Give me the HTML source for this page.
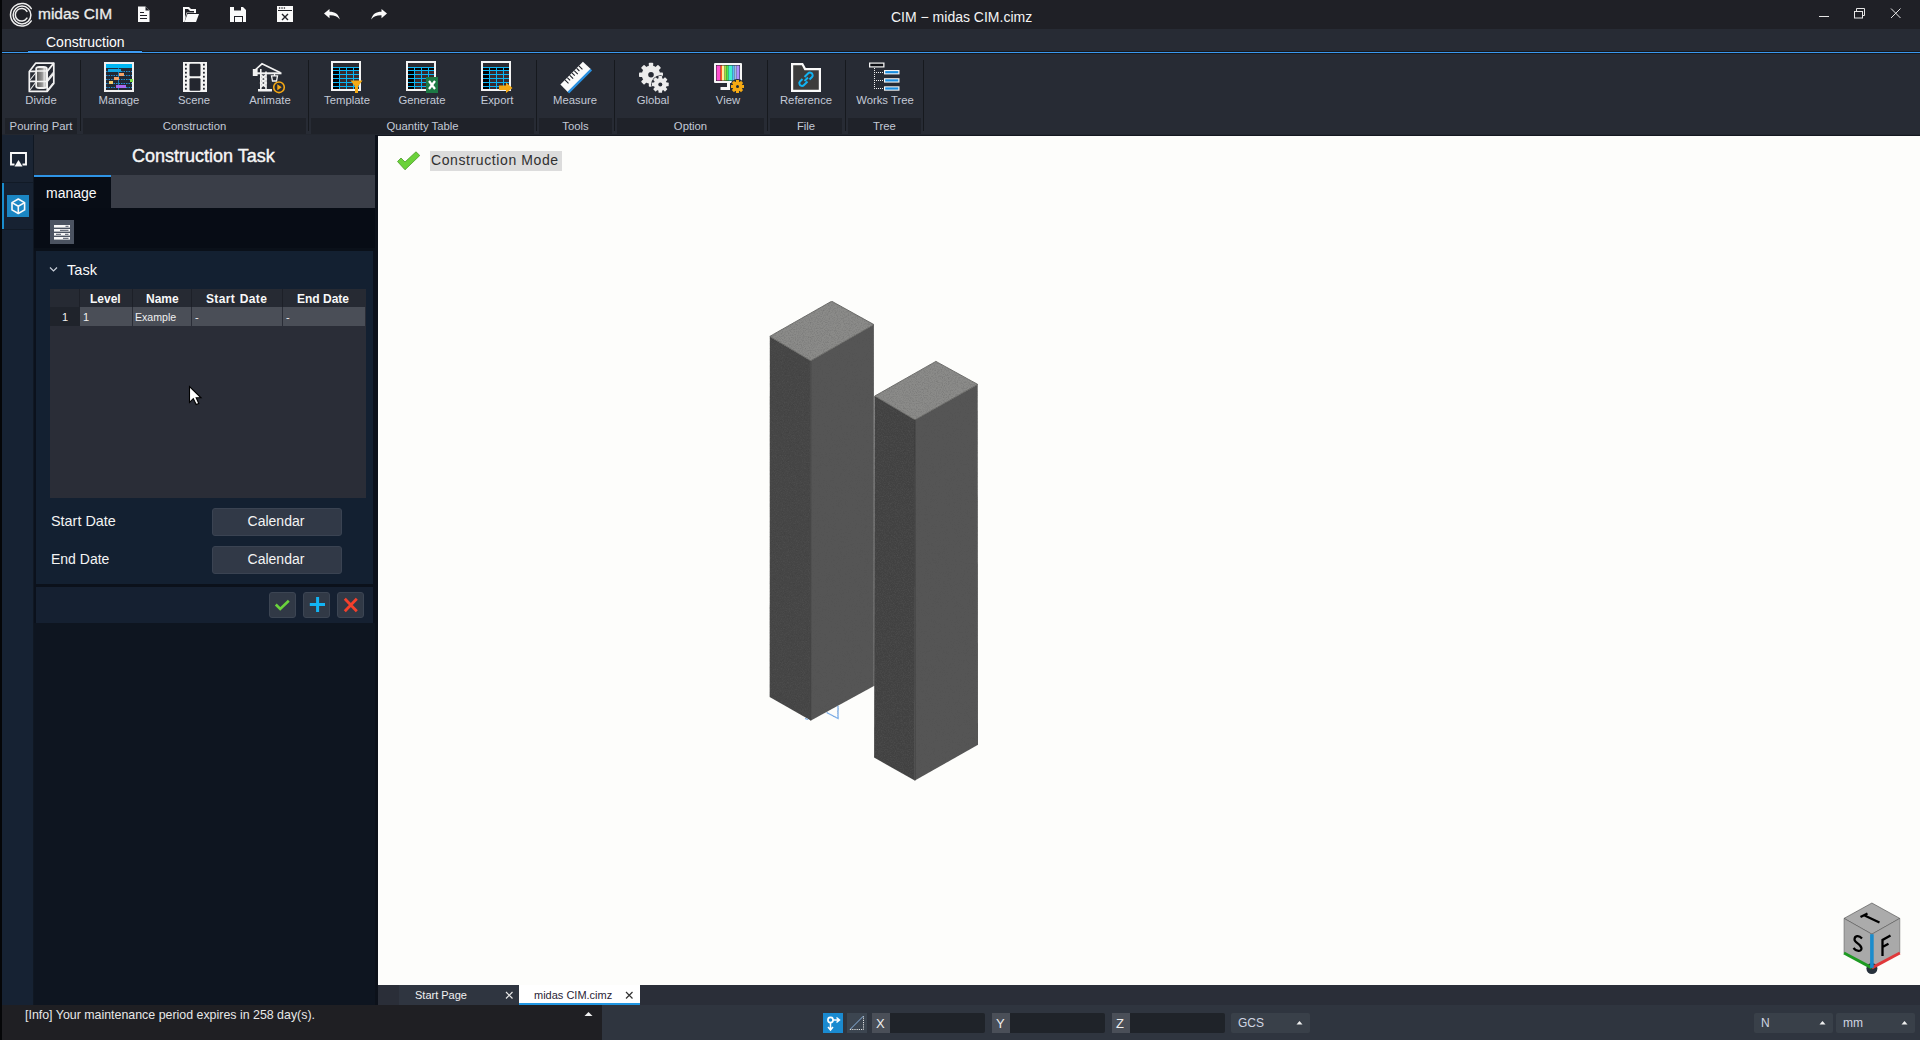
<!DOCTYPE html>
<html><head><meta charset="utf-8">
<style>
*{margin:0;padding:0;box-sizing:border-box}
html,body{width:1920px;height:1040px;overflow:hidden;background:#0a0f18;font-family:"Liberation Sans",sans-serif}
.a{position:absolute}
svg{position:absolute;overflow:visible}
#title{left:0;top:0;width:1920px;height:29px;background:#1f2026}
#ribtabs{left:0;top:29px;width:1920px;height:23px;background:#272b34}
#blueline{left:2px;top:51px;width:1918px;height:3px;background:linear-gradient(#16191f 0 1px,#3a98ee 1px 2px,#16191f 2px 3px)}
#ribbon{left:0;top:53px;width:1920px;height:81px;background:#272b34}
#ribbot{left:0;top:134px;width:1920px;height:2px;background:linear-gradient(#23272f 0 1px,#141820 1px 2px)}
#lborder{left:0;top:0;width:2px;height:1040px;background:#050608}
.rb{color:#c3c9d6;font-size:11.3px;text-align:center;width:90px;top:93px;height:14px;line-height:14px;white-space:nowrap}
.gl{top:118px;height:16px;background:#1f2229;color:#c3c9d6;font-size:11.3px;text-align:center;line-height:16px;white-space:nowrap}
.sep{top:60px;width:1px;height:71px;background:#16191e}
#side{left:2px;top:135px;width:32px;height:870px;background:#131c28}
#panel{left:34px;top:135px;width:341px;height:870px;background:#0b111c}
#pborder{left:375px;top:135px;width:3px;height:850px;background:#0c121c}
#view{left:378px;top:136px;width:1542px;height:849px;background:#fdfdfb}
#doctabs{left:378px;top:985px;width:1542px;height:20px;background:#2a2e38}
#status{left:0;top:1005px;width:602px;height:35px;background:#1f1f23}
#status2{left:602px;top:1005px;width:1318px;height:35px;background:#2f353f}
.t{white-space:nowrap;line-height:1}
</style></head><body>
<div class="a" id="title"></div>
<div class="a" id="ribtabs"></div>
<div class="a" id="ribbon"></div>
<div class="a" id="ribbot"></div>
<div class="a" id="blueline"></div>
<div class="a" id="side"></div>
<div class="a" id="panel"></div>
<div class="a" id="pborder"></div>
<div class="a" id="view"></div>
<div class="a" id="doctabs"></div>
<div class="a" id="status"></div>
<div class="a" id="status2"></div>

<!-- TITLEBAR -->
<svg style="left:0;top:0" width="120" height="29">
  <g fill="none" stroke="#eeeeee" stroke-width="1.5" stroke-linecap="round">
    <path d="M31.28,8.65 A11.3,11.3 0 1 0 31.28,20.95"/>
    <circle cx="22" cy="15" r="8.9"/>
    <path d="M26.94,11.46 A6.3,6.3 0 1 0 26.94,18.14"/>
  </g>
</svg>
<div class="a t" style="left:38px;top:6px;font-size:15.5px;color:#ececec;-webkit-text-stroke:0.3px #ececec">midas CIM</div>
<svg style="left:137px;top:6px" width="14" height="17"><path d="M1,0.5 H8.5 L12.5,4.5 V16 H1 Z" fill="#fafafa"/><path d="M8.5,0.5 V4.5 H12.5" fill="#1f2026"/><path d="M3,6.5 H7 M3,9.5 H10 M3,12.5 H10" stroke="#1f2026" stroke-width="1.1"/></svg>
<svg style="left:183px;top:7px" width="18" height="16"><path d="M0,0 H6 L8,2 H13 V6 H4 L1.5,15 H0 Z" fill="#fafafa"/><path d="M4.5,7 H16 L13,15 H1.5 Z" fill="#fafafa"/><path d="M2,2 H5 L7,4 H11 V5.5 H3.5 L2,11 Z" fill="#1f2026"/></svg>
<svg style="left:230px;top:7px" width="17" height="16"><path d="M0,0 H13 L16,3 V15 H0 Z" fill="#fafafa"/><rect x="4" y="0" width="7" height="3.5" fill="#1f2026"/><rect x="4" y="9" width="9" height="6" fill="#1f2026"/><rect x="5" y="10" width="7" height="5" fill="#fafafa"/></svg>
<svg style="left:277px;top:6px" width="17" height="17"><rect x="0" y="0" width="16" height="16" fill="#fafafa"/><rect x="1" y="4" width="14" height="1" fill="#1f2026"/><circle cx="2.6" cy="2" r="0.8" fill="#1f2026"/><circle cx="5" cy="2" r="0.8" fill="#1f2026"/><circle cx="7.4" cy="2" r="0.8" fill="#1f2026"/><path d="M5,8 L11,14 M11,8 L5,14" stroke="#1f2026" stroke-width="1.4"/></svg>
<svg style="left:324px;top:9px" width="17" height="12"><path d="M0,4.5 L5.5,0 V2.8 C11,2.8 14.5,5 15.8,10.5 C13.5,7.5 10.5,6.2 5.5,6.3 V9.3 Z" fill="#fafafa"/></svg>
<svg style="left:371px;top:9px" width="17" height="12"><path d="M16,4.5 L10.5,0 V2.8 C5,2.8 1.5,5 0.2,10.5 C2.5,7.5 5.5,6.2 10.5,6.3 V9.3 Z" fill="#fafafa"/></svg>

<div class="a t" style="left:891px;top:10px;font-size:14px;color:#f4f4f4">CIM − midas CIM.cimz</div>

<svg style="left:1815px;top:5px" width="100" height="20">
  <path d="M4,11.5 H14" stroke="#e6e6e6" stroke-width="1"/>
  <g fill="none" stroke="#e6e6e6" stroke-width="1"><rect x="39.5" y="6.5" width="8" height="6.5"/><path d="M41.5,6.5 V3.5 H49.5 V10.5 H47.5"/></g>
  <path d="M76,3.5 L85.5,13 M85.5,3.5 L76,13" stroke="#e6e6e6" stroke-width="1"/>
</svg>

<!-- RIBBON TAB -->
<div class="a t" style="left:46px;top:35px;font-size:14px;color:#ffffff">Construction</div>
<div class="a" style="left:28px;top:50px;width:114px;height:3px;background:linear-gradient(#16191f 0 1px,#3d9cf5 1px 3px)"></div>

<!-- RIBBON SEPARATORS / GROUP LABELS -->
<div class="a sep" style="left:80px"></div>
<div class="a sep" style="left:308px"></div>
<div class="a sep" style="left:536px"></div>
<div class="a sep" style="left:614px"></div>
<div class="a sep" style="left:767px"></div>
<div class="a sep" style="left:845px"></div>
<div class="a sep" style="left:923px"></div>
<div class="a gl" style="left:5px;width:72px">Pouring Part</div>
<div class="a gl" style="left:83px;width:223px">Construction</div>
<div class="a gl" style="left:311px;width:223px">Quantity Table</div>
<div class="a gl" style="left:539px;width:73px">Tools</div>
<div class="a gl" style="left:617px;width:147px">Option</div>
<div class="a gl" style="left:770px;width:72px">File</div>
<div class="a gl" style="left:848px;width:73px">Tree</div>

<!-- RIBBON BUTTON LABELS -->
<div class="a rb" style="left:-4px">Divide</div>
<div class="a rb" style="left:74px">Manage</div>
<div class="a rb" style="left:149px">Scene</div>
<div class="a rb" style="left:225px">Animate</div>
<div class="a rb" style="left:302px">Template</div>
<div class="a rb" style="left:377px">Generate</div>
<div class="a rb" style="left:452px">Export</div>
<div class="a rb" style="left:530px">Measure</div>
<div class="a rb" style="left:608px">Global</div>
<div class="a rb" style="left:683px">View</div>
<div class="a rb" style="left:761px">Reference</div>
<div class="a rb" style="left:840px">Works Tree</div>


<!-- RIBBON ICONS -->
<svg style="left:0;top:0" width="0" height="0">
 <defs>
  <symbol id="tbl" viewBox="0 0 30 30">
   <rect x="0" y="0" width="30" height="30" fill="#f4f4f4"/>
   <rect x="2" y="2" width="26" height="26" fill="#2b2b31"/>
   <rect x="2" y="6" width="26" height="22" fill="#3a2a2c"/>
   <rect x="2" y="6" width="6" height="22" fill="#000"/>
   <rect x="2" y="6" width="26" height="3" fill="#000"/>
   <g fill="#0ab4f4">
    <rect x="2" y="6" width="26" height="1"/><rect x="2" y="9" width="26" height="1"/><rect x="2" y="13" width="26" height="1"/>
    <rect x="2" y="17" width="26" height="1"/><rect x="2" y="21" width="26" height="1"/><rect x="2" y="25" width="26" height="1"/>
    <rect x="8" y="6" width="1" height="22"/><rect x="15" y="6" width="1" height="22"/><rect x="22" y="6" width="1" height="22"/>
   </g>
  </symbol>
 </defs>
</svg>
<!-- Divide -->
<svg style="left:28px;top:62px" width="28" height="32">
 <defs><linearGradient id="cyl" x1="0" x2="1"><stop offset="0" stop-color="#5a5a5a"/><stop offset="0.6" stop-color="#9a9a9a"/><stop offset="0.8" stop-color="#e0e0e0"/><stop offset="1" stop-color="#bdbdbd"/></linearGradient></defs>
 <path d="M2,28 L8,20 M2,18 L8,10.5 M19.5,17.5 L25,10.5 M19.5,28 L25,21" stroke="#e8e8e8" stroke-width="1.1"/>
 <g fill="none" stroke="#f2f2f2" stroke-width="1.7" stroke-linejoin="round">
  <path d="M7.8,1.1 H25.8 V21.5 L19.2,29.4 H1.3 V9.4 Z"/>
  <path d="M1.3,9.4 H19.2 V29.4 M19.2,9.4 L25.8,1.1 M1.3,19.4 H19.2 L25.8,11.4"/>
 </g>
 <rect x="7.3" y="3.9" width="12.4" height="23" rx="4" ry="2.6" fill="#f2f2f2"/>
 <rect x="9" y="6" width="9" height="19" rx="1" fill="url(#cyl)"/>
 <path d="M8,9 H19 M8,19.4 H19" stroke="#f2f2f2" stroke-width="1.5"/>
</svg>
<!-- Manage -->
<svg style="left:104px;top:62px" width="30" height="30">
 <rect x="0" y="0" width="30" height="30" fill="#f0f0f0"/>
 <rect x="2" y="2" width="26" height="26" fill="#222833"/>
 <rect x="2" y="2" width="26" height="4" fill="#00b6f2"/>
 <g stroke="#1f8fd6" stroke-width="1" stroke-dasharray="1.5 1">
  <path d="M2,9.5 H28 M2,13.5 H28 M2,17.5 H28 M2,21.5 H28 M2,25.5 H28"/>
 </g>
 <path d="M14.5,6 V28" stroke="#1f8fd6" stroke-width="0.8"/>
 <rect x="4" y="7" width="13" height="3" fill="#11a3e0"/>
 <rect x="15" y="11" width="5" height="3" fill="#f5a26a"/>
 <rect x="10" y="15" width="5" height="3" fill="#f5a26a"/>
 <rect x="5" y="19" width="4" height="3" fill="#f5cc6a"/>
 <rect x="26" y="17" width="3" height="3" fill="#7de04a"/>
 <rect x="12" y="23" width="10" height="3" fill="#a86af0"/>
</svg>
<!-- Scene -->
<svg style="left:183px;top:62px" width="24" height="30">
 <rect x="0" y="0" width="24" height="30" fill="#f4f4f4"/>
 <rect x="6.5" y="1.8" width="11" height="12.5" rx="1" fill="#23262f"/>
 <rect x="6.5" y="16.3" width="11" height="12.5" rx="1" fill="#23262f"/>
 <g fill="#23262f">
  <rect x="2" y="1.8" width="1.8" height="1.8"/><rect x="2" y="5.8" width="1.8" height="1.8"/><rect x="2" y="9.8" width="1.8" height="1.8"/><rect x="2" y="13.8" width="1.8" height="1.8"/><rect x="2" y="17.8" width="1.8" height="1.8"/><rect x="2" y="21.8" width="1.8" height="1.8"/><rect x="2" y="25.8" width="1.8" height="1.8"/>
  <rect x="20" y="1.8" width="1.8" height="1.8"/><rect x="20" y="5.8" width="1.8" height="1.8"/><rect x="20" y="9.8" width="1.8" height="1.8"/><rect x="20" y="13.8" width="1.8" height="1.8"/><rect x="20" y="17.8" width="1.8" height="1.8"/><rect x="20" y="21.8" width="1.8" height="1.8"/><rect x="20" y="25.8" width="1.8" height="1.8"/>
 </g>
</svg>
<!-- Animate -->
<svg style="left:252px;top:62px" width="34" height="32">
 <g fill="none" stroke="#f2f2f2" stroke-width="1.6">
  <path d="M8.8,28 V7 M14,28 V9.5"/>
  <path d="M8.8,13 L14,17 L8.8,21 L14,25 M14,13 L8.8,17 L14,21 L8.8,25"/>
  <path d="M2,9 L10,1.8 L28.5,10.8"/>
 </g>
 <rect x="1" y="10.3" width="28.5" height="2" fill="#f2f2f2"/>
 <rect x="0.8" y="7" width="4.8" height="7" fill="#f2f2f2"/>
 <rect x="6" y="27" width="14" height="2.5" fill="#f2f2f2"/>
 <path d="M19.5,13.8 H25.5 L24.5,19 H20.5 Z" fill="none" stroke="#f2f2f2" stroke-width="1.3"/>
 <path d="M22.5,12 V14" stroke="#f2f2f2" stroke-width="1.2"/>
 <circle cx="27" cy="25.3" r="5.3" fill="#272b34" stroke="#f5a815" stroke-width="1.6"/>
 <path d="M25.3,22.3 L29.7,25.3 L25.3,28.3 Z" fill="#f5a815"/>
</svg>
<!-- Template -->
<svg style="left:331px;top:61px" width="34" height="34">
 <use href="#tbl" x="0" y="0" width="30" height="30"/>
 <path d="M19.5,19.5 H31.5 L27,25.5 V32 H24 V25.5 Z" fill="#f5aa14"/>
</svg>
<!-- Generate -->
<svg style="left:406px;top:61px" width="34" height="34">
 <use href="#tbl" x="0" y="0" width="30" height="30"/>
 <rect x="20" y="16" width="12" height="16" fill="#1d7a45"/>
 <path d="M23,20 L29,28 M29,20 L23,28" stroke="#fff" stroke-width="2.2"/>
</svg>
<!-- Export -->
<svg style="left:481px;top:61px" width="34" height="34">
 <use href="#tbl" x="0" y="0" width="30" height="30"/>
 <path d="M18,24.5 H25 V21.5 L31.5,27 L25,32 V29 H18 Z" fill="#f5aa14"/>
</svg>
<!-- Measure -->
<svg style="left:558px;top:60px" width="36" height="36">
 <path d="M2.4,24.5 L24.9,1.8 L33,9.3 L10,32.3 Z" fill="#fafafa"/>
 <path d="M10.3,32.6 L33.3,9.6" stroke="#2a90e0" stroke-width="2.2"/>
 <path d="M6.97,19.89 L10.51,23.41 M9.29,17.55 L12.13,20.36 M11.61,15.21 L15.15,18.73 M13.93,12.87 L16.77,15.68 M16.25,10.53 L19.79,14.05 M18.57,8.19 L21.40,11.01 M20.89,5.85 L24.43,9.37 " stroke="#1d2028" stroke-width="1.1"/>
</svg>
<!-- Global -->
<svg style="left:638px;top:62px" width="34" height="34">
 <g fill="#ececec" transform="translate(13 12.75)">
  <circle r="9.3"/>
  <rect x="-2.2" y="-12" width="4.4" height="24" rx="0.8"/><rect x="-2.2" y="-12" width="4.4" height="24" rx="0.8" transform="rotate(45)"/><rect x="-2.2" y="-12" width="4.4" height="24" rx="0.8" transform="rotate(90)"/><rect x="-2.2" y="-12" width="4.4" height="24" rx="0.8" transform="rotate(135)"/>
 </g>
 <circle cx="13" cy="12.75" r="2.8" fill="#272b34"/>
 <circle cx="22.3" cy="22.4" r="9.2" fill="#272b34"/>
 <g fill="#ececec" transform="translate(22.3 22.4)">
  <circle r="6.4"/>
  <rect x="-1.8" y="-8.4" width="3.6" height="16.8" rx="0.6"/><rect x="-1.8" y="-8.4" width="3.6" height="16.8" rx="0.6" transform="rotate(45)"/><rect x="-1.8" y="-8.4" width="3.6" height="16.8" rx="0.6" transform="rotate(90)"/><rect x="-1.8" y="-8.4" width="3.6" height="16.8" rx="0.6" transform="rotate(135)"/>
 </g>
 <circle cx="22.3" cy="22.4" r="2" fill="#272b34"/>
</svg>
<!-- View -->
<svg style="left:713px;top:62px" width="32" height="32">
 <rect x="1" y="1" width="28" height="20" rx="1" fill="#f6f6f6"/>
 <rect x="3" y="3" width="24" height="16" fill="#1a1a22"/>
 <g>
  <rect x="3.5" y="3.5" width="4" height="15" fill="#ff4fd0"/><rect x="7.5" y="3.5" width="1.5" height="15" fill="#ff5a20"/><rect x="9" y="3.5" width="2.5" height="15" fill="#fff0a0"/><rect x="11.5" y="3.5" width="2" height="15" fill="#a0e040"/><rect x="13.5" y="3.5" width="2" height="15" fill="#4de84a"/><rect x="15.5" y="3.5" width="4" height="15" fill="#40f0d0"/><rect x="19.5" y="3.5" width="2" height="15" fill="#5ab8ff"/><rect x="21.5" y="3.5" width="2" height="15" fill="#9cc0e0"/><rect x="23.5" y="3.5" width="3" height="15" fill="#b090ff"/>
 </g>
 <rect x="14" y="21" width="3" height="7" fill="#f6f6f6"/>
 <rect x="7.5" y="25" width="9.5" height="3" fill="#f6f6f6"/>
 <circle cx="24.5" cy="24.5" r="7.5" fill="#272b34"/>
 <g fill="#f5aa14" transform="translate(24.5 24.5)">
  <circle r="5"/><rect x="-1.5" y="-6.5" width="3" height="13"/><rect x="-1.5" y="-6.5" width="3" height="13" transform="rotate(45)"/><rect x="-1.5" y="-6.5" width="3" height="13" transform="rotate(90)"/><rect x="-1.5" y="-6.5" width="3" height="13" transform="rotate(135)"/>
 </g>
 <circle cx="24.5" cy="24.5" r="1.5" fill="#1b2a3a"/>
</svg>
<!-- Reference -->
<svg style="left:791px;top:63px" width="31" height="30">
 <path d="M0,0 H12 L14.8,5 H30 V29 H0 Z" fill="#fafafa"/>
 <path d="M2.2,2.2 H10.8 L13.4,7.2 H27.8 V26.8 H2.2 Z" fill="#3c3c3c"/>
 <g fill="none" stroke="#12b4f4" stroke-width="2">
  <path d="M13.5,14 L17,10.5 C18.5,9 21,9.5 21.5,11.5 C22,12.5 21.5,13.5 21,14 L18.5,16.5"/>
  <path d="M16.5,18.5 L13,22 C11.5,23.5 9,23 8.5,21 C8,20 8.5,19 9,18.5 L11.5,16"/>
  <path d="M13.5,18 L17,14.5"/>
 </g>
</svg>
<!-- Works Tree -->
<svg style="left:869px;top:62px" width="32" height="30">
 <rect x="0" y="0.5" width="15.5" height="5" fill="#f4f4f4"/>
 <rect x="1.3" y="1.7" width="12.9" height="2.6" fill="#0c0e14"/>
 <g fill="#eeeeee"><rect x="5" y="6" width="1" height="1"/><rect x="5" y="8" width="1" height="1"/><rect x="5" y="10" width="1" height="1"/><rect x="5" y="12" width="1" height="1"/><rect x="5" y="14" width="1" height="1"/><rect x="5" y="16" width="1" height="1"/><rect x="5" y="18" width="1" height="1"/><rect x="5" y="20" width="1" height="1"/><rect x="5" y="22" width="1" height="1"/><rect x="5" y="24" width="1" height="1"/><rect x="5" y="26" width="1" height="1"/><rect x="7" y="10" width="1" height="1"/><rect x="9" y="10" width="1" height="1"/><rect x="11" y="10" width="1" height="1"/><rect x="13" y="10" width="1" height="1"/><rect x="7" y="18" width="1" height="1"/><rect x="9" y="18" width="1" height="1"/><rect x="11" y="18" width="1" height="1"/><rect x="13" y="18" width="1" height="1"/><rect x="7" y="26" width="1" height="1"/><rect x="9" y="26" width="1" height="1"/><rect x="11" y="26" width="1" height="1"/><rect x="13" y="26" width="1" height="1"/></g>
 <g fill="#f4f4f4"><rect x="15" y="8" width="15.5" height="4.4"/><rect x="15" y="16.2" width="15.5" height="4.4"/><rect x="15" y="24.3" width="15.5" height="4.4"/></g>
 <g fill="#1a8ee0"><rect x="16.2" y="9.1" width="13.1" height="2.2"/><rect x="16.2" y="17.3" width="13.1" height="2.2"/><rect x="16.2" y="25.4" width="13.1" height="2.2"/></g>
</svg>


<!-- LEFT SIDEBAR -->
<div class="a" style="left:2px;top:135px;width:32px;height:870px;background:#162233"></div>
<div class="a" style="left:2px;top:135px;width:32px;height:47px;background:#1a2433"></div>
<div class="a" style="left:2px;top:182px;width:32px;height:1px;background:#111a26"></div>
<div class="a" style="left:2px;top:183px;width:32px;height:46px;background:#172232"></div>
<div class="a" style="left:2px;top:229px;width:32px;height:1px;background:#111a26"></div>
<div class="a" style="left:2px;top:183px;width:2px;height:46px;background:#1a8ccc"></div>
<div class="a" style="left:33px;top:135px;width:1px;height:870px;background:#101823"></div>
<svg style="left:9px;top:151px" width="19" height="17">
 <path d="M5.5,13.5 H2 V2 H17 V13.5 H13.5" fill="none" stroke="#fafafa" stroke-width="1.9"/>
 <path d="M9.5,9 L13.5,15.5 H5.5 Z" fill="#fafafa"/>
</svg>
<div class="a" style="left:7px;top:195px;width:22px;height:22px;background:#1b86c3"></div>
<svg style="left:11px;top:198px" width="15" height="17">
 <g fill="none" stroke="#fafafa" stroke-width="1.6" stroke-linejoin="round">
  <path d="M7.3,1 L13.6,4.6 V11.9 L7.3,15.5 L1,11.9 V4.6 Z"/>
  <path d="M1,4.6 L7.3,8.2 L13.6,4.6 M7.3,8.2 V15.5"/>
 </g>
</svg>

<!-- PANEL -->
<div class="a" style="left:34px;top:135px;width:341px;height:40px;background:#252932"></div>
<div class="a t" style="left:132px;top:146.5px;font-size:18px;color:#f6f6f6;-webkit-text-stroke:0.4px #f6f6f6">Construction Task</div>
<div class="a" style="left:34px;top:175px;width:341px;height:33px;background:#3a3e48"></div>
<div class="a" style="left:34px;top:175px;width:77px;height:33px;background:#080d16"></div>
<div class="a" style="left:34px;top:175px;width:77px;height:2px;background:#2f94e6"></div>
<div class="a t" style="left:46px;top:186px;font-size:14px;color:#fafafa">manage</div>
<div class="a" style="left:34px;top:208px;width:341px;height:40px;background:#070c15"></div>
<div class="a" style="left:34px;top:248px;width:341px;height:3px;background:#0a1019"></div>
<div class="a" style="left:50px;top:220px;width:24px;height:24px;background:#4b5361"></div>
<svg style="left:53px;top:224px" width="18" height="17">
 <g fill="#f8f8f8"><rect x="1" y="1" width="16" height="2.6"/><rect x="1" y="5" width="16" height="2.6"/><rect x="1" y="9" width="16" height="2.6"/><rect x="1" y="13" width="16" height="2.6"/></g>
 <g fill="#4b5361"><rect x="12.5" y="1.8" width="3" height="1"/><rect x="7" y="5.8" width="8.5" height="1"/><rect x="3" y="9.8" width="5" height="1"/><rect x="12" y="9.8" width="3.5" height="1"/><rect x="10" y="13.8" width="5.5" height="1"/></g>
</svg>

<div class="a" style="left:36px;top:251px;width:337px;height:333px;background:#132031"></div>
<svg style="left:49px;top:266px" width="10" height="7"><path d="M1,1.5 L4.5,5 L8,1.5" fill="none" stroke="#c8ced8" stroke-width="1.2"/></svg>
<div class="a t" style="left:67px;top:263px;font-size:14.6px;color:#fafafa">Task</div>

<!-- table -->
<div class="a" style="left:50px;top:289px;width:316px;height:209px;background:#2a2d37"></div>
<div class="a" style="left:50px;top:289px;width:316px;height:18px;background:#262a33"></div>
<div class="a" style="left:79px;top:289px;width:1px;height:18px;background:#1d2028"></div>
<div class="a" style="left:132px;top:289px;width:1px;height:18px;background:#1d2028"></div>
<div class="a" style="left:191px;top:289px;width:1px;height:18px;background:#1d2028"></div>
<div class="a" style="left:282px;top:289px;width:1px;height:18px;background:#1d2028"></div>
<div class="a" style="left:50px;top:307px;width:30px;height:19px;background:#1f232b"></div>
<div class="a" style="left:80px;top:307px;width:52px;height:19px;background:#4a4e57"></div>
<div class="a" style="left:133px;top:307px;width:58px;height:19px;background:#4a4e57"></div>
<div class="a" style="left:192px;top:307px;width:90px;height:19px;background:#4a4e57"></div>
<div class="a" style="left:283px;top:307px;width:82px;height:19px;background:#4a4e57"></div>
<div class="a t" style="left:90px;top:293px;font-size:12px;font-weight:bold;color:#f8f8f8">Level</div>
<div class="a t" style="left:146px;top:293px;font-size:12px;font-weight:bold;color:#f8f8f8">Name</div>
<div class="a t" style="left:206px;top:293px;font-size:12px;font-weight:bold;color:#f8f8f8;word-spacing:1px;letter-spacing:0.35px">Start Date</div>
<div class="a t" style="left:297px;top:293px;font-size:12px;font-weight:bold;color:#f8f8f8">End Date</div>
<div class="a t" style="left:62px;top:312px;font-size:11px;color:#f0f0f0">1</div>
<div class="a t" style="left:83px;top:312px;font-size:11px;color:#f0f0f0">1</div>
<div class="a t" style="left:135px;top:312px;font-size:10.6px;color:#f0f0f0">Example</div>
<div class="a t" style="left:195px;top:312px;font-size:11px;color:#f0f0f0">-</div>
<div class="a t" style="left:286px;top:312px;font-size:11px;color:#f0f0f0">-</div>

<div class="a t" style="left:51px;top:514px;font-size:14.4px;color:#f4f4f4">Start Date</div>
<div class="a t" style="left:51px;top:552px;font-size:14px;color:#f4f4f4">End Date</div>
<div class="a" style="left:212px;top:508px;width:130px;height:28px;background:#313947;border:1px solid #3a4352;border-radius:3px"></div>
<div class="a" style="left:212px;top:546px;width:130px;height:28px;background:#313947;border:1px solid #3a4352;border-radius:3px"></div>
<div class="a t" style="left:211px;top:514px;width:130px;text-align:center;font-size:14px;color:#f4f4f4">Calendar</div>
<div class="a t" style="left:211px;top:552px;width:130px;text-align:center;font-size:14px;color:#f4f4f4">Calendar</div>

<div class="a" style="left:36px;top:584px;width:337px;height:3px;background:#0b111b"></div>
<div class="a" style="left:36px;top:587px;width:337px;height:36px;background:#152031"></div>
<div class="a" style="left:269px;top:592px;width:27px;height:26px;background:#313946;border:1px solid #3c4553;border-radius:3px"></div>
<div class="a" style="left:303px;top:592px;width:27px;height:26px;background:#313946;border:1px solid #3c4553;border-radius:3px"></div>
<div class="a" style="left:337px;top:592px;width:27px;height:26px;background:#313946;border:1px solid #3c4553;border-radius:3px"></div>
<svg style="left:274px;top:597px" width="18" height="16"><path d="M1.8,7.5 L6.2,12 L14.8,3.8" fill="none" stroke="#6ad33c" stroke-width="2.6"/></svg>
<svg style="left:308px;top:596px" width="18" height="18"><path d="M9.6,1 V16 M1.8,8.5 H17" fill="none" stroke="#12b4f4" stroke-width="3"/></svg>
<svg style="left:342px;top:597px" width="18" height="16"><path d="M2.8,1.8 L14.8,14.2 M14.8,1.8 L2.8,14.2" fill="none" stroke="#f4402c" stroke-width="2.8"/></svg>
<div class="a" style="left:34px;top:623px;width:341px;height:382px;background:#0e1520"></div>


<!-- VIEWPORT -->
<div class="a" style="left:375px;top:135px;width:3px;height:870px;background:#0c111a"></div>
<svg style="left:396px;top:151px" width="26" height="20">
 <path d="M1.5,10.5 L5,7 L9,11 L20,0.8 L23.8,4.5 L9,18.8 Z" fill="#6bd23a" stroke="#4a9a28" stroke-width="0.8"/>
</svg>
<div class="a" style="left:430px;top:151px;width:132px;height:20px;background:#dcdcdc"></div>
<div class="a t" style="left:431px;top:153px;font-size:14px;color:#303030;letter-spacing:0.6px">Construction Mode</div>

<svg style="left:0;top:0" width="1920" height="1040">
 <defs><filter id="grain" x="0" y="0" width="100%" height="100%" filterUnits="objectBoundingBox">
  <feTurbulence type="fractalNoise" baseFrequency="0.85" numOctaves="2" seed="7" result="n"/>
  <feColorMatrix in="n" type="matrix" values="0 0 0 0 0.1  0 0 0 0 0.1  0 0 0 0 0.1  1.0 0 0 0 -0.42" result="a"/>
  <feComposite in="a" in2="SourceGraphic" operator="in" result="b"/>
  <feMerge><feMergeNode in="SourceGraphic"/><feMergeNode in="b"/></feMerge>
 </filter></defs>
 <g filter="url(#grain)">
 <!-- left column -->
 <polygon points="769.8,336.4 810.7,360.7 810.9,720.6 769.7,697" fill="#444444"/>
 <polygon points="810.7,360.7 873.9,324.6 873.9,686 810.9,720.6" fill="#555555"/>
 <rect x="873.9" y="396" width="1.2" height="290" fill="#8a8a8a"/>
 <polygon points="769.8,336.4 831.7,301.2 873.9,324.6 810.7,360.7" fill="#8b8b89" stroke="#666664" stroke-width="0.9" stroke-linejoin="round"/>
 <path d="M838,705.8 V718.5 L826.6,712.5" fill="none" stroke="#7fb2ee" stroke-width="1.3"/>
 <path d="M805,718.5 L808,719.5" stroke="#7fb2ee" stroke-width="1.3"/>
 <!-- right column -->
 <polygon points="874.9,396 915,419.8 914.8,780.5 874.1,757.6" fill="#424242"/>
 <polygon points="915,419.8 977.7,384.4 978,744.8 914.8,780.5" fill="#545454"/>
 <polygon points="874.9,396 935.9,361.4 977.7,384.4 915,419.8" fill="#8b8b89" stroke="#666664" stroke-width="0.9" stroke-linejoin="round"/>
 </g>
 <g stroke="#3a3a3a" stroke-width="0.8" fill="none">
  <path d="M810.7,360.7 V720.6 M915,419.8 V780.5"/>
 </g>
</svg>

<!-- view cube -->
<svg style="left:1830px;top:895px" width="85" height="85">
 <g transform="translate(-1830 -895)">
  <polygon points="1871.9,903 1899.8,918.4 1871.9,934.2 1844,918.4" fill="#ababab" stroke="#444" stroke-width="0.6"/>
  <polygon points="1844,918.4 1871.9,934.2 1871.9,967.9 1844,953" fill="#a9a9a9" stroke="#555" stroke-width="0.5"/>
  <polygon points="1899.8,918.4 1871.9,934.2 1871.9,967.9 1899.8,953" fill="#a9a9a9" stroke="#555" stroke-width="0.5"/>
  <circle cx="1871.9" cy="968.5" r="5.5" fill="#27313c"/>
  <path d="M1844,953 L1871.9,967.9" stroke="#1e9a22" stroke-width="3"/>
  <path d="M1899.8,953 L1871.9,967.9" stroke="#e0383a" stroke-width="3"/>
  <path d="M1871.9,934.2 V967.9" stroke="#1a8ccc" stroke-width="3.6"/>
  <path d="M1860.5,917 L1867.5,913.5 M1864,915.2 L1879.5,922.5" stroke="#000" stroke-width="2.3"/>
  <path d="M1862,938.5 C1859,935 1854.5,935.5 1854.5,939.5 C1854.5,943 1861.5,944 1861.5,948.5 C1861.5,952 1856,951.5 1853.5,948" fill="none" stroke="#000" stroke-width="2.2"/>
  <path d="M1882.5,956 V940 L1890.5,935.5 M1882.5,947 L1888.5,943.8" fill="none" stroke="#000" stroke-width="2.3"/>
 </g>
</svg>

<!-- DOC TABS -->
<div class="a" style="left:399px;top:985px;width:120px;height:20px;background:#2f3540"></div>
<div class="a t" style="left:415px;top:990px;font-size:11px;color:#f2f2f2">Start Page</div>
<svg style="left:505px;top:991px" width="9" height="9"><path d="M1,1 L7.5,7.5 M7.5,1 L1,7.5" stroke="#e8e8e8" stroke-width="1.2"/></svg>
<div class="a" style="left:519px;top:985px;width:121px;height:20px;background:#ffffff"></div>
<div class="a" style="left:519px;top:1003px;width:121px;height:2px;background:#2197e3"></div>
<div class="a t" style="left:534px;top:990px;font-size:11px;color:#2a2436">midas CIM.cimz</div>
<svg style="left:625px;top:991px" width="9" height="9"><path d="M1,1 L7.5,7.5 M7.5,1 L1,7.5" stroke="#333" stroke-width="1.2"/></svg>

<!-- STATUS BAR -->
<div class="a t" style="left:25px;top:1009px;font-size:12.4px;color:#e8e8e8">[Info] Your maintenance period expires in 258 day(s).</div>
<svg style="left:584px;top:1011px" width="9" height="6"><path d="M0.5,5 L4.5,1 L8.5,5 Z" fill="#f0f0f0"/></svg>
<div class="a" style="left:823px;top:1013px;width:20px;height:20px;background:#1a8ad0"></div>
<svg style="left:823px;top:1013px" width="20" height="20">
 <circle cx="7.5" cy="7" r="2.6" fill="none" stroke="#fff" stroke-width="1.6"/>
 <path d="M7.5,9.6 V16.5 M5,14 L7.5,17 L10,14 M10,7 H16 M13.5,4.5 L16.5,7 L13.5,9.5" fill="none" stroke="#fff" stroke-width="1.5"/>
</svg>
<div class="a" style="left:847px;top:1013px;width:20px;height:20px;background:#3c4550"></div>
<svg style="left:847px;top:1013px" width="20" height="20"><path d="M3,16.5 L16.5,3" stroke="#8ab4e0" stroke-width="1"/><path d="M3,16.5 H16.5 V3" fill="none" stroke="#e0e0e0" stroke-width="1" stroke-dasharray="1.2 1"/></svg>
<div class="a" style="left:872px;top:1013px;width:18px;height:20px;background:#4a4f58"></div>
<div class="a" style="left:890px;top:1013px;width:95px;height:20px;background:#1f2329;border-radius:0 2px 2px 0"></div>
<div class="a t" style="left:876px;top:1017px;font-size:13px;color:#eeeeee">X</div>
<div class="a" style="left:992px;top:1013px;width:18px;height:20px;background:#4a4f58"></div>
<div class="a" style="left:1010px;top:1013px;width:95px;height:20px;background:#1f2329;border-radius:0 2px 2px 0"></div>
<div class="a t" style="left:996px;top:1017px;font-size:13px;color:#eeeeee">Y</div>
<div class="a" style="left:1112px;top:1013px;width:18px;height:20px;background:#4a4f58"></div>
<div class="a" style="left:1130px;top:1013px;width:95px;height:20px;background:#1f2329;border-radius:0 2px 2px 0"></div>
<div class="a t" style="left:1116px;top:1017px;font-size:13px;color:#eeeeee">Z</div>
<div class="a" style="left:1231px;top:1013px;width:79px;height:20px;background:#394049;border-radius:2px"></div>
<div class="a t" style="left:1238px;top:1017px;font-size:12px;color:#d0d6e2">GCS</div>
<svg style="left:1296px;top:1020px" width="8" height="5"><path d="M0.5,4.5 L3.5,1 L6.5,4.5 Z" fill="#f0f0f0"/></svg>
<div class="a" style="left:1754px;top:1013px;width:79px;height:20px;background:#394049;border-radius:2px"></div>
<div class="a t" style="left:1761px;top:1017px;font-size:12px;color:#d0d6e2">N</div>
<svg style="left:1819px;top:1020px" width="8" height="5"><path d="M0.5,4.5 L3.5,1 L6.5,4.5 Z" fill="#f0f0f0"/></svg>
<div class="a" style="left:1836px;top:1013px;width:79px;height:20px;background:#394049;border-radius:2px"></div>
<div class="a t" style="left:1843px;top:1017px;font-size:12px;color:#d0d6e2">mm</div>
<svg style="left:1901px;top:1020px" width="8" height="5"><path d="M0.5,4.5 L3.5,1 L6.5,4.5 Z" fill="#f0f0f0"/></svg>


<svg style="left:185px;top:383px" width="20" height="25">
 <g transform="translate(-185 -383)">
 <path d="M189.5,386.5 V402.5 L193.3,398.7 L196.2,404.6 L198.8,403.4 L196.2,397.8 H201 Z" fill="#fff" stroke="#000" stroke-width="1.1" stroke-linejoin="miter"/>
 </g>
</svg>

<div class="a" id="lborder"></div>
</body></html>
